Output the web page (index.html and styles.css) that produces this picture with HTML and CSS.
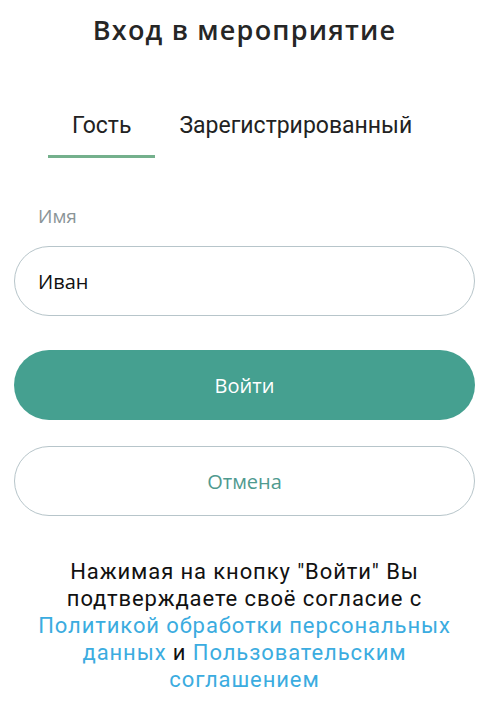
FILE: index.html
```html
<!DOCTYPE html>
<html>
<head>
  <meta charset="utf-8">
  <title>Вход в мероприятие</title>
  <link rel="stylesheet" href="styles.css">
</head>
<body>
  <div class="page">
    <h1>Вход в мероприятие</h1>

    <div class="tabs">
      <div class="tab active">Гость</div>
      <div class="tab">Зарегистрированный</div>
    </div>

    <div class="field">
      <label for="name">Имя</label>
      <input type="text" id="name" value="Иван">
    </div>

    <button class="btn btn-primary">Войти</button>
    <button class="btn btn-outline">Отмена</button>

    <p class="agreement">
      Нажимая на кнопку "Войти" Вы подтверждаете своё согласие с
      <a href="#">Политикой обработки персональных данных</a> и
      <a href="#">Пользовательским соглашением</a>
    </p>
  </div>
</body>
</html>
```

FILE: styles.css
```css
body {
  margin: 0;
  background: #fff;
  font-family: "Open Sans", Arial, sans-serif;
  color: #222;
}
.page {
  padding: 0 14px;
  display: flex;
  flex-direction: column;
}
h1 {
  margin: 12px 0 0;
  font-size: 27px;
  line-height: 36px;
  font-weight: 600;
  letter-spacing: 1.2px;
  text-align: center;
  color: #262626;
}
.tabs {
  display: flex;
  margin: 63px 0 0 34px;
  font-family: Roboto, Arial, sans-serif;
}
.tab {
  padding: 0 24px 14px;
  font-size: 23px;
  line-height: 30px;
  color: #222;
  border-bottom: 3px solid transparent;
}
.tab.active {
  border-bottom-color: #74b08c;
}
.field {
  margin-top: 45px;
}
label {
  display: block;
  padding-left: 24px;
  font-size: 19px;
  line-height: 26px;
  color: #8a9497;
}
input {
  display: block;
  width: 100%;
  height: 70px;
  margin-top: 17px;
  padding: 0 23px;
  box-sizing: border-box;
  border: 1px solid #b7c5ca;
  border-radius: 35px;
  font-family: "Open Sans", Arial, sans-serif;
  font-size: 20px;
  color: #111;
  outline: none;
}
.btn {
  display: block;
  width: 100%;
  height: 70px;
  border-radius: 35px;
  font-family: "Open Sans", Arial, sans-serif;
  font-size: 20px;
  cursor: pointer;
}
.btn-primary {
  margin-top: 34px;
  border: none;
  background-color: #45a090;
  color: #fff;
}
.btn-outline {
  margin-top: 26px;
  border: 1px solid #b7c5ca;
  background-color: #fff;
  color: #4f9a8f;
}
.agreement {
  margin: 42px 10px 0;
  font-family: Roboto, Arial, sans-serif;
  font-size: 22px;
  line-height: 27px;
  letter-spacing: 0.9px;
  text-align: center;
  color: #111;
}
.agreement a {
  color: #3bace0;
  text-decoration: none;
}
```
